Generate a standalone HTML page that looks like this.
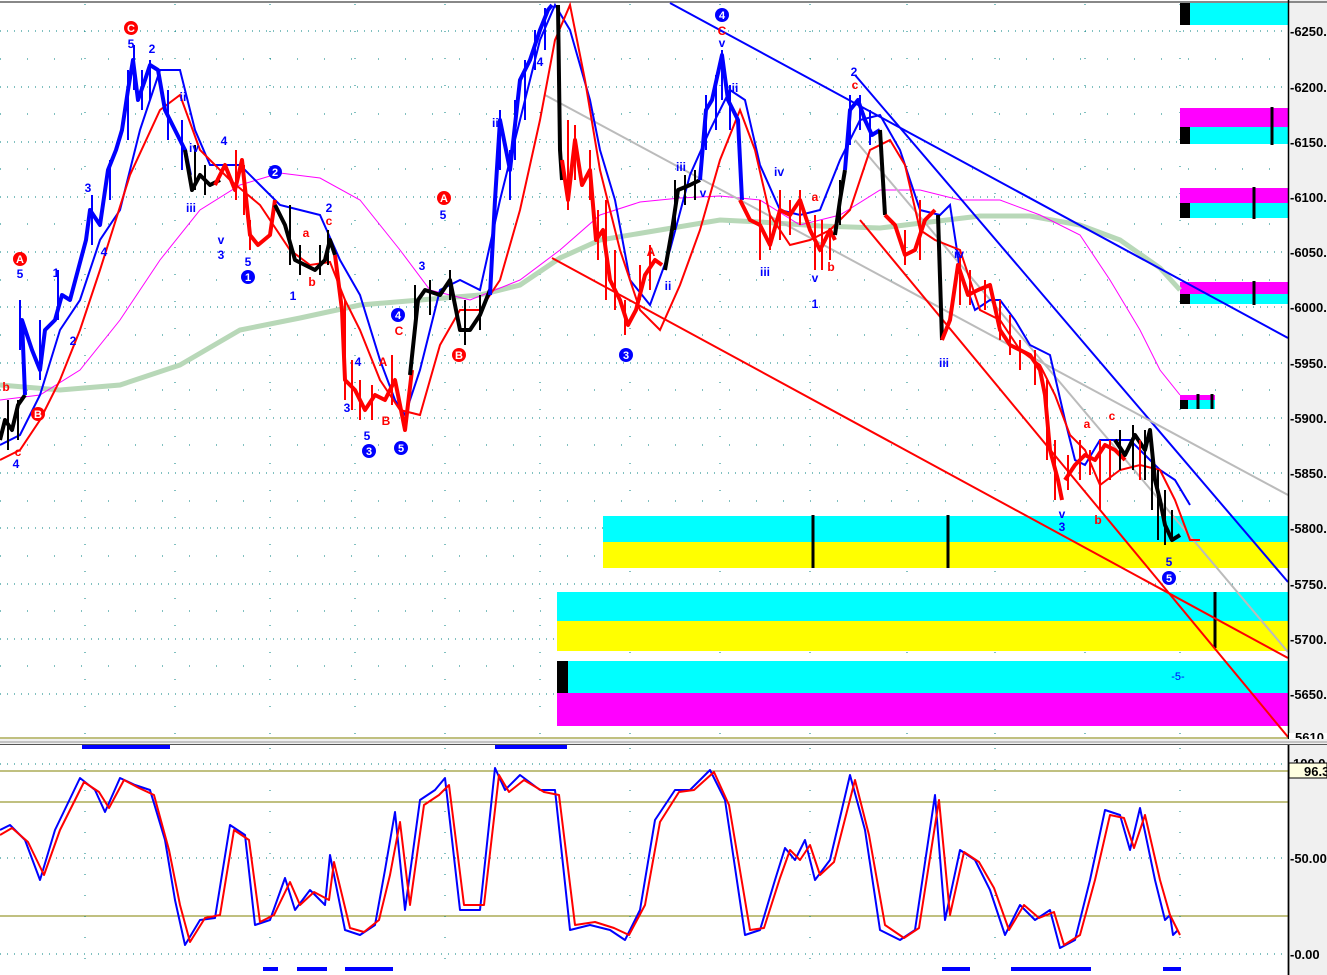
<!DOCTYPE html>
<html><head><meta charset="utf-8"><style>
html,body{margin:0;padding:0;background:#fff;width:1327px;height:975px;overflow:hidden}
svg{display:block}
text{font-family:"Liberation Sans",Arial,sans-serif}
</style></head><body>
<svg width="1327" height="975" viewBox="0 0 1327 975" xmlns="http://www.w3.org/2000/svg">
<rect width="1327" height="975" fill="#fff"/>
<rect x="1289" y="0" width="38" height="975" fill="#f0f0f0"/>
<line x1="0" y1="2" x2="1327" y2="2" stroke="#888" stroke-width="2"/>
<g stroke="#008080" stroke-width="1" stroke-dasharray="1,6">
<line x1="0" y1="31" x2="1288" y2="31"/><line x1="0" y1="87" x2="1288" y2="87"/>
<line x1="0" y1="142" x2="1288" y2="142"/><line x1="0" y1="197" x2="1288" y2="197"/>
<line x1="0" y1="252" x2="1288" y2="252"/><line x1="0" y1="307" x2="1288" y2="307"/>
<line x1="0" y1="363" x2="1288" y2="363"/><line x1="0" y1="418" x2="1288" y2="418"/>
<line x1="0" y1="473" x2="1288" y2="473"/><line x1="0" y1="528" x2="1288" y2="528"/>
<line x1="0" y1="584" x2="1288" y2="584"/><line x1="0" y1="639" x2="1288" y2="639"/>
<line x1="0" y1="694" x2="1288" y2="694"/>
</g>
<g stroke="#008080" stroke-width="1" stroke-dasharray="1,26">
<line x1="0" y1="59" x2="1288" y2="59"/><line x1="0" y1="114" x2="1288" y2="114"/>
<line x1="0" y1="169" x2="1288" y2="169"/><line x1="0" y1="224" x2="1288" y2="224"/>
<line x1="0" y1="280" x2="1288" y2="280"/><line x1="0" y1="335" x2="1288" y2="335"/>
<line x1="0" y1="390" x2="1288" y2="390"/><line x1="0" y1="445" x2="1288" y2="445"/>
<line x1="0" y1="501" x2="1288" y2="501"/><line x1="0" y1="556" x2="1288" y2="556"/>
<line x1="0" y1="611" x2="1288" y2="611"/><line x1="0" y1="666" x2="1288" y2="666"/>
</g>
<g stroke="#008080" stroke-width="1" stroke-dasharray="1,26">
<line x1="85" y1="4" x2="85" y2="738"/><line x1="175" y1="4" x2="175" y2="738"/>
<line x1="270" y1="4" x2="270" y2="738"/><line x1="355" y1="4" x2="355" y2="738"/>
<line x1="445" y1="4" x2="445" y2="738"/><line x1="540" y1="4" x2="540" y2="738"/>
<line x1="630" y1="4" x2="630" y2="738"/><line x1="720" y1="4" x2="720" y2="738"/>
<line x1="810" y1="4" x2="810" y2="738"/><line x1="907" y1="4" x2="907" y2="738"/>
<line x1="995" y1="4" x2="995" y2="738"/><line x1="1085" y1="4" x2="1085" y2="738"/>
<line x1="1180" y1="4" x2="1180" y2="738"/>
</g>
<rect x="603" y="516" width="685" height="26" fill="#00ffff"/>
<rect x="603" y="542" width="685" height="26" fill="#ffff00"/>
<rect x="557" y="592" width="731" height="29" fill="#00ffff"/>
<rect x="557" y="621" width="731" height="30" fill="#ffff00"/>
<rect x="557" y="661" width="731" height="32" fill="#00ffff"/>
<rect x="557" y="661" width="11" height="32" fill="#000"/>
<rect x="557" y="693" width="731" height="33" fill="#ff00ff"/>
<rect x="1180" y="3" width="108" height="22" fill="#00ffff"/><rect x="1180" y="3" width="10" height="22" fill="#000"/>
<rect x="1180" y="108" width="108" height="19" fill="#ff00ff"/><rect x="1180" y="127" width="108" height="17" fill="#00ffff"/><rect x="1180" y="127" width="10" height="17" fill="#000"/>
<rect x="1180" y="188" width="108" height="15" fill="#ff00ff"/><rect x="1180" y="203" width="108" height="15" fill="#00ffff"/><rect x="1180" y="203" width="10" height="15" fill="#000"/>
<rect x="1180" y="282" width="108" height="12" fill="#ff00ff"/><rect x="1180" y="294" width="108" height="10" fill="#00ffff"/><rect x="1180" y="294" width="10" height="10" fill="#000"/>
<rect x="1180" y="395" width="35" height="5" fill="#ff00ff"/><rect x="1180" y="400" width="35" height="9" fill="#00ffff"/><rect x="1180" y="400" width="8" height="9" fill="#000"/>
<g stroke="#000" stroke-width="3">
<line x1="813" y1="515" x2="813" y2="568"/><line x1="948" y1="515" x2="948" y2="568"/>
<line x1="1215" y1="592" x2="1215" y2="648"/><line x1="1272" y1="107" x2="1272" y2="145"/>
<line x1="1254" y1="187" x2="1254" y2="219"/><line x1="1254" y1="281" x2="1254" y2="305"/>
<line x1="1198" y1="394" x2="1198" y2="409"/><line x1="1212" y1="394" x2="1212" y2="409"/>
</g>
<polyline fill="none" stroke="#b8d8b8" stroke-width="5" points="0,385 60,390 120,385 180,365 240,330 300,318 360,305 420,300 480,295 520,285 560,258 600,240 660,230 720,220 760,222 820,226 880,228 930,222 980,216 1030,216 1080,225 1120,240 1160,268 1180,290"/>
<polyline fill="none" stroke="#ff00ff" stroke-width="1" points="0,400 40,395 80,370 120,320 160,260 200,210 240,185 280,173 320,178 360,200 400,250 430,290 470,300 520,280 560,250 600,215 640,202 680,198 720,196 760,200 800,225 840,215 880,190 920,190 960,200 1000,200 1040,215 1080,235 1110,280 1140,330 1160,370 1180,395"/>
<g fill="none" stroke-width="2">
<line x1="670" y1="3" x2="1288" y2="338" stroke="#0000ff"/>
<line x1="855" y1="75" x2="1288" y2="582" stroke="#0000ff"/>
<line x1="545" y1="95" x2="1288" y2="495" stroke="#bbb"/>
<line x1="855" y1="140" x2="1288" y2="652" stroke="#bbb"/>
<line x1="552" y1="258" x2="1288" y2="658" stroke="#ff0000"/>
<line x1="860" y1="220" x2="1288" y2="737" stroke="#ff0000"/>
</g>
<polyline fill="none" stroke="#0000ff" stroke-width="2" points="0,445 20,435 40,395 60,330 80,300 100,240 120,210 140,130 160,70 180,70 195,130 210,165 240,165 260,185 280,205 300,210 320,215 340,260 360,295 380,360 395,400 405,415 420,370 440,290 460,280 480,290 500,200 520,120 540,40 555,5 570,30 590,100 600,150 615,200 630,280 650,305 670,250 690,175 710,130 730,90 745,100 760,165 780,210 800,215 820,210 840,160 860,120 880,115 900,150 920,210 940,215 950,205 960,270 975,310 990,300 1000,300 1015,320 1030,345 1050,355 1065,420 1075,460 1085,465 1100,440 1130,440 1145,455 1160,470 1175,480 1190,505"/>
<polyline fill="none" stroke="#ff0000" stroke-width="2" points="0,460 20,450 40,420 60,380 80,330 100,270 130,175 160,110 180,95 200,150 230,180 260,205 290,250 310,265 330,262 345,300 360,330 380,380 400,410 420,415 440,345 460,310 480,310 500,280 520,210 540,120 555,40 570,5 585,80 600,170 620,250 640,310 660,330 680,285 700,230 720,160 740,110 755,150 770,215 790,245 810,240 830,230 850,210 870,150 890,140 905,165 920,230 935,240 960,250 980,310 1000,320 1020,350 1040,365 1055,395 1070,435 1085,450 1100,485 1120,470 1140,465 1160,470 1175,500 1190,540 1200,540"/>
<g fill="none" stroke-width="4" stroke-linejoin="round">
<polyline stroke="#000" points="0,440 5,420 12,430 18,405 25,395"/>
<polyline stroke="#0000ff" points="25,395 22,320 32,350 40,370 45,330 55,320 62,295 70,300 78,270 86,240 90,210 100,225 108,170 116,150 122,130 128,90 133,60 138,100 145,80 150,65 158,70 165,110 175,130 185,150 190,175"/>
<polyline stroke="#000" points="185,150 192,190 200,175 210,185 220,180"/>
<polyline stroke="#ff0000" points="215,185 225,165 235,190 242,160 250,235 258,245 270,235 275,200"/>
<polyline stroke="#000" points="275,205 285,225 295,260 305,265 315,270 325,260 330,240 335,255"/>
<polyline stroke="#ff0000" points="335,255 342,310 345,380 355,390 365,410 375,395 385,400 395,380 405,430 412,370"/>
<polyline stroke="#000" points="410,375 418,300 425,290 440,295 450,280 460,330 470,330 480,315 490,290"/>
<polyline stroke="#0000ff" points="490,295 495,200 500,120 510,170 520,80 530,60 540,30 548,10 552,5"/>
<polyline stroke="#000" points="558,5 560,150 562,180"/>
<polyline stroke="#ff0000" points="562,160 568,200 575,140 582,185 590,170 596,240 603,230 610,280 620,300 628,325 636,310 645,275 655,260 662,265"/>
<polyline stroke="#000" points="665,270 672,230 678,190 690,185 700,180"/>
<polyline stroke="#0000ff" points="700,180 706,110 712,100 722,55 728,100 738,120 742,200"/>
<polyline stroke="#ff0000" points="740,200 750,220 760,225 770,245 780,210 790,215 800,200 810,230 820,250 830,230 835,240"/>
<polyline stroke="#000" points="835,235 840,200 845,170"/>
<polyline stroke="#0000ff" points="845,170 850,110 858,100 865,120 872,135 880,130"/>
<polyline stroke="#000" points="880,130 885,215"/>
<polyline stroke="#ff0000" points="885,215 895,225 905,255 915,250 925,220 935,210"/>
<polyline stroke="#000" points="938,215 942,340"/>
<polyline stroke="#ff0000" points="942,340 950,320 958,265 968,295 978,290 990,285 1000,330 1010,345 1020,350 1030,355 1040,370 1045,395 1050,450 1058,480 1062,500"/>
<polyline stroke="#ff0000" points="1065,480 1075,465 1085,455 1095,460 1105,445 1115,450 1125,460"/>
<polyline stroke="#000" points="1115,440 1125,455 1135,435 1145,450 1150,430 1155,480 1160,500 1165,525 1172,540 1180,535"/>
</g>
<!-- jitter spikes -->
<g stroke-width="2">
<path stroke="#0000ff" d="M20,300V350M40,320V380M58,270V320M92,195V245M110,160V200M128,70V140M134,45V90M142,70V110M150,60V100M168,90V140M182,120V170M500,110V170M510,150V200M515,100V160M525,60V120M535,30V70M545,8V50M706,95V150M716,75V130M722,50V100M730,85V130M850,95V145M860,95V130M870,110V145"/>
<path stroke="#ff0000" d="M236,150V200M244,165V215M250,220V250M345,300V400M352,360V410M360,380V420M372,385V420M392,355V405M568,120V210M575,125V180M590,150V200M598,210V260M606,200V300M615,250V310M625,300V335M640,265V300M650,245V290M760,200V260M770,215V250M780,190V240M790,200V235M800,190V225M815,215V270M822,220V270M830,230V260M905,230V265M920,200V260M960,255V305M970,270V305M985,280V310M1000,300V340M1010,315V355M1020,340V370M1035,350V385M1047,380V460M1055,440V500M1068,455V490M1080,440V480M1090,450V475M1100,440V510M1110,440V480M1120,430V470M1140,440V480"/>
<path stroke="#000" d="M8,400V450M18,400V440M195,145V190M205,165V195M290,205V265M300,245V275M320,245V275M328,230V265M415,285V330M430,280V315M450,270V300M465,300V345M480,295V330M675,180V230M685,175V205M695,170V200M840,180V225M1120,430V470M1133,425V470M1145,430V480M1152,460V510M1158,470V540M1165,490V545M1172,510V540"/>
</g>
<g font-size="12" font-weight="bold" fill="#0000ff" text-anchor="middle">
<text x="20" y="278">5</text><text x="56" y="277">1</text><text x="88" y="192">3</text><text x="104" y="256">4</text><text x="73" y="345">2</text>
<text x="131" y="48">5</text><text x="152" y="53">2</text><text x="183" y="101">ii</text><text x="194" y="152">iv</text><text x="224" y="145">4</text><text x="191" y="212">iii</text>
<text x="221" y="244">v</text><text x="221" y="259">3</text><text x="248" y="266">5</text><text x="329" y="212">2</text><text x="293" y="300">1</text>
<text x="422" y="270">3</text><text x="443" y="219">5</text><text x="347" y="412">3</text><text x="367" y="440">5</text><text x="358" y="366">4</text>
<text x="497" y="127">iii</text><text x="540" y="66">4</text><text x="722" y="47">v</text><text x="735" y="92">ii</text><text x="681" y="171">iii</text><text x="703" y="197">v</text>
<text x="779" y="176">iv</text><text x="765" y="276">iii</text><text x="815" y="282">v</text><text x="815" y="308">1</text><text x="854" y="76">2</text><text x="668" y="290">ii</text>
<text x="944" y="367">iii</text><text x="959" y="258">iv</text><text x="1062" y="518">v</text><text x="1062" y="531">3</text><text x="1169" y="566">5</text><text x="16" y="468">4</text>
<text x="1178" y="680" font-weight="normal" font-size="11">-5-</text>
</g>
<g font-size="12" font-weight="bold" fill="#ff0000" text-anchor="middle">
<text x="6" y="391">b</text><text x="18" y="456">c</text><text x="329" y="225">c</text><text x="306" y="237">a</text><text x="312" y="286">b</text>
<text x="399" y="335">C</text><text x="383" y="366">A</text><text x="386" y="425">B</text><text x="722" y="35">C</text><text x="855" y="89">c</text>
<text x="815" y="201">a</text><text x="831" y="271">b</text><text x="1087" y="428">a</text><text x="1112" y="420">c</text><text x="1098" y="524">b</text><text x="651" y="256">A</text>
</g>
<g font-size="11" font-weight="bold" text-anchor="middle">
<circle cx="131" cy="28" r="7" fill="#ff0000"/><text x="131" y="32" fill="#fff">C</text>
<circle cx="20" cy="259" r="7" fill="#ff0000"/><text x="20" y="263" fill="#fff">A</text>
<circle cx="38" cy="414" r="7" fill="#ff0000"/><text x="38" y="418" fill="#fff">B</text>
<circle cx="444" cy="198" r="7" fill="#ff0000"/><text x="444" y="202" fill="#fff">A</text>
<circle cx="459" cy="355" r="7" fill="#ff0000"/><text x="459" y="359" fill="#fff">B</text>
<circle cx="248" cy="277" r="7" fill="#0000ff"/><text x="248" y="281" fill="#fff">1</text>
<circle cx="275" cy="172" r="7" fill="#0000ff"/><text x="275" y="176" fill="#fff">2</text>
<circle cx="369" cy="451" r="7" fill="#0000ff"/><text x="369" y="455" fill="#fff">3</text>
<circle cx="398" cy="315" r="7" fill="#0000ff"/><text x="398" y="319" fill="#fff">4</text>
<circle cx="401" cy="448" r="7" fill="#0000ff"/><text x="401" y="452" fill="#fff">5</text>
<circle cx="626" cy="355" r="7" fill="#0000ff"/><text x="626" y="359" fill="#fff">3</text>
<circle cx="722" cy="15" r="7" fill="#0000ff"/><text x="722" y="19" fill="#fff">4</text>
<circle cx="1169" cy="578" r="7" fill="#0000ff"/><text x="1169" y="582" fill="#fff">5</text>
</g>
<line x1="1288.5" y1="0" x2="1288.5" y2="975" stroke="#000" stroke-width="1.5"/>
<g font-size="13" font-weight="bold" fill="#000">
<text x="1290" y="36">-6250.</text><text x="1290" y="92">-6200.</text><text x="1290" y="147">-6150.</text><text x="1290" y="202">-6100.</text>
<text x="1290" y="257">-6050.</text><text x="1290" y="312">-6000.</text><text x="1290" y="368">-5950.</text><text x="1290" y="423">-5900.</text>
<text x="1290" y="478">-5850.</text><text x="1290" y="533">-5800.</text><text x="1290" y="589">-5750.</text><text x="1290" y="644">-5700.</text>
<text x="1290" y="699">-5650.</text>
</g>
<rect x="1289" y="733" width="38" height="8" fill="#fff"/>
<text x="1295" y="742" font-size="13" font-weight="bold" fill="#000">5610</text>
<rect x="0" y="739" width="1327" height="6" fill="#f0f0f0"/>
<line x1="0" y1="738" x2="1288" y2="738" stroke="#808000" stroke-width="1"/>
<line x1="0" y1="742" x2="1327" y2="742" stroke="#999" stroke-width="1"/>
<line x1="0" y1="744.5" x2="1327" y2="744.5" stroke="#555" stroke-width="1"/>
<g stroke="#008080" stroke-dasharray="1,6"><line x1="0" y1="764" x2="1288" y2="764"/><line x1="0" y1="858" x2="1288" y2="858"/><line x1="0" y1="954" x2="1288" y2="954"/></g>
<g stroke="#808000" stroke-width="1"><line x1="0" y1="771" x2="1288" y2="771"/><line x1="0" y1="802" x2="1288" y2="802"/><line x1="0" y1="916" x2="1288" y2="916"/></g>
<g stroke="#008080" stroke-dasharray="1,20">
<line x1="85" y1="748" x2="85" y2="970"/><line x1="270" y1="748" x2="270" y2="970"/><line x1="445" y1="748" x2="445" y2="970"/><line x1="630" y1="748" x2="630" y2="970"/><line x1="810" y1="748" x2="810" y2="970"/><line x1="995" y1="748" x2="995" y2="970"/><line x1="1180" y1="748" x2="1180" y2="970"/>
</g>
<g fill="#0000ff">
<rect x="82" y="745" width="88" height="4"/><rect x="495" y="745" width="72" height="4"/>
<rect x="263" y="967" width="15" height="4"/><rect x="297" y="967" width="30" height="4"/><rect x="345" y="967" width="48" height="4"/>
<rect x="942" y="967" width="28" height="4"/><rect x="1011" y="967" width="80" height="4"/><rect x="1163" y="967" width="18" height="4"/>
</g>
<g fill="none" stroke-width="2" stroke-linejoin="round">
<polyline stroke="#0000ff" points="0,830 10,825 25,840 40,880 55,830 80,778 95,790 105,812 120,778 135,785 150,790 165,840 175,900 185,945 200,920 215,918 230,825 245,835 255,925 270,920 285,878 295,910 310,890 325,905 330,855 345,930 360,935 375,925 385,870 395,812 405,910 420,800 435,790 445,778 460,910 480,910 495,768 505,790 520,775 540,790 555,790 570,930 590,925 610,930 625,940 640,910 655,820 675,790 690,790 710,770 725,800 745,935 760,930 775,880 785,848 795,860 805,840 815,880 830,860 850,775 865,830 880,930 900,940 915,930 935,795 945,920 960,850 975,860 990,890 1005,935 1020,905 1035,920 1050,910 1060,948 1075,940 1090,880 1105,810 1120,815 1130,850 1140,808 1155,880 1165,920 1170,915 1173,935 1178,930"/>
<polyline stroke="#ff0000" points="0,835 12,828 28,842 44,875 60,830 84,782 99,792 109,808 124,780 139,788 154,795 169,850 180,905 190,942 205,918 220,915 234,830 249,840 260,922 274,915 290,882 300,905 314,892 329,900 334,862 350,928 364,932 379,920 390,875 400,822 410,905 424,805 439,795 449,785 464,905 484,905 499,775 509,792 524,780 544,792 559,795 575,925 595,922 614,928 629,935 645,905 660,822 679,792 694,790 714,772 729,805 750,930 764,928 780,878 790,850 800,860 810,845 820,875 834,862 855,780 869,835 885,925 904,938 919,928 939,800 950,915 964,852 979,862 994,888 1009,930 1024,905 1039,918 1054,912 1064,945 1080,935 1095,880 1110,815 1124,818 1134,848 1145,815 1160,880 1170,915 1180,935"/>
</g>
<line x1="1288.5" y1="745" x2="1288.5" y2="975" stroke="#000" stroke-width="1.5"/>
<g font-size="13" font-weight="bold" fill="#000">
<text x="1293" y="768">100.0</text>
<rect x="1289" y="763" width="38" height="15" fill="#ffffe0" stroke="#000" stroke-width="1"/>
<text x="1304" y="776">96.3</text>
<text x="1290" y="863">-50.00</text><text x="1290" y="959">-0.00</text>
</g>
</svg>
</body></html>
